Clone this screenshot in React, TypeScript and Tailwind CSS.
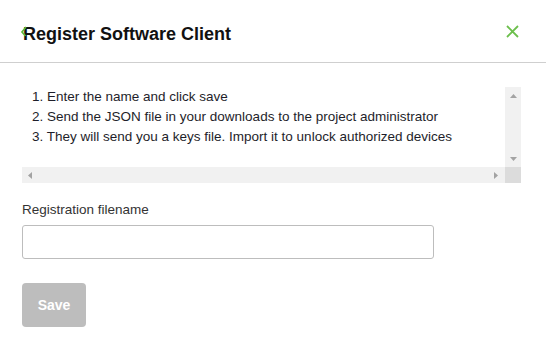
import React from "react";

export default function App() {
  return (
    <div className="w-[546px] h-[346px] bg-white font-['Liberation_Sans',Arial,sans-serif] text-[#222]">
      <div className="h-[63px] border-b border-[#cfcfcf] flex items-start justify-between pl-[23px] pr-[27px]">
        <div className="relative mt-[22px]">
          <h1 className="text-[18px] leading-[24px] font-bold text-[#111]">Register Software Client</h1>
          <svg className="absolute left-[-3px] top-[4px]" width="9" height="13" viewBox="0 0 9 13">
            <path d="M6 1 L2 6 L5.5 10" fill="none" stroke="#5cb83a" strokeWidth="1.7" />
          </svg>
        </div>
        <button className="mt-[25px] w-[13px] h-[13px]" aria-label="close">
          <svg width="13" height="13" viewBox="0 0 13 13">
            <path d="M1 1 L12 12 M12 1 L1 12" stroke="#6cbf4c" strokeWidth="1.8" />
          </svg>
        </button>
      </div>
      <div className="px-[22px] pt-[24px]">
        <div className="w-[499px] h-[96px] flex flex-col">
          <div className="flex h-[80px]">
            <div className="flex-1 pl-[10px] text-[13.5px] leading-[20px] text-[#1e1e2a]">
              <div>1. Enter the name and click save</div>
              <div>2. Send the JSON file in your downloads to the project administrator</div>
              <div>3. They will send you a keys file. Import it to unlock authorized devices</div>
            </div>
            <div className="w-[16px] bg-[#f1f1f1] flex flex-col items-center justify-between pt-[7px] pb-[6px]">
              <svg width="7" height="4" viewBox="0 0 7 4"><path d="M0 4 L3.5 0 L7 4 Z" fill="#a3a3a3" /></svg>
              <svg width="7" height="4" viewBox="0 0 7 4"><path d="M0 0 L3.5 4 L7 0 Z" fill="#a3a3a3" /></svg>
            </div>
          </div>
          <div className="flex h-[16px]">
            <div className="flex-1 bg-[#f1f1f1] flex items-center justify-between pl-[6px] pr-[7px]">
              <svg width="4" height="7" viewBox="0 0 4 7"><path d="M4 0 L0 3.5 L4 7 Z" fill="#a3a3a3" /></svg>
              <svg width="4" height="7" viewBox="0 0 4 7"><path d="M0 0 L4 3.5 L0 7 Z" fill="#a3a3a3" /></svg>
            </div>
            <div className="w-[16px] bg-[#dcdcdc]" />
          </div>
        </div>
        <label className="block mt-[17px] text-[13.5px] leading-[20px] text-[#333]">Registration filename</label>
        <input className="block mt-[5px] w-[412px] h-[34px] border border-[#bdbdbd] rounded-[3px] outline-none px-2 text-[14px]" />
        <button className="mt-[24px] w-[64px] h-[44px] bg-[#bdbdbd] rounded-[4px] text-white font-bold text-[14px]">Save</button>
      </div>
    </div>
  );
}
